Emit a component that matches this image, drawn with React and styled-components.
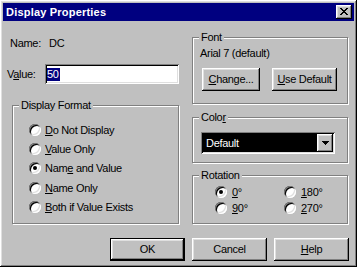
import React from 'react';
import styled, { createGlobalStyle } from "styled-components";

const GlobalStyle = createGlobalStyle`
  html, body {
    margin: 0;
    padding: 0;
    background: #c0c0c0;
  }
  * {
    box-sizing: border-box;
  }
`;

const raised = `
  box-shadow: inset -1px -1px #000, inset 1px 1px #fff, inset -2px -2px #808080, inset 2px 2px #dfdfdf;
`;

const sunken = `
  box-shadow: inset 1px 1px #808080, inset -1px -1px #fff, inset 2px 2px #000, inset -2px -2px #dfdfdf;
`;

const Window = styled.div`
  width: 357px;
  height: 267px;
  padding: 3px;
  background: #c0c0c0;
  display: flex;
  flex-direction: column;
  font-family: "Liberation Sans", Arial, sans-serif;
  font-size: 11px;
  letter-spacing: -0.3px;
  color: #000;
  ${raised}
`;

const TitleBar = styled.div`
  height: 18px;
  background: #000080;
  display: flex;
  align-items: center;
  justify-content: space-between;
  padding: 0 2px 0 3px;
`;

const Title = styled.span`
  color: #fff;
  font-weight: bold;
  letter-spacing: 0.2px;
`;

const CloseButton = styled.div`
  width: 16px;
  height: 14px;
  background: #c0c0c0;
  display: flex;
  align-items: center;
  justify-content: center;
  padding-bottom: 1px;
  ${raised}
`;

const Body = styled.div`
  flex: 1;
  display: grid;
  grid-template-columns: 172px 157px;
  grid-template-rows: auto auto;
  column-gap: 13px;
  padding: 0 7px 0 4px;
`;

const Column = styled.div`
  display: flex;
  flex-direction: column;
`;

const NameRow = styled.div`
  display: flex;
  height: 13px;
  line-height: 13px;
  margin-top: 16px;
  padding-left: 3px;
`;

const FieldLabel = styled.span`
  width: ${props => props.width}px;
  flex: none;
`;

const ValueRow = styled.div`
  display: flex;
  align-items: center;
  height: 20px;
  margin-top: 14px;
`;

const TextBox = styled.div`
  flex: 1;
  height: 20px;
  background: #fff;
  padding: 2px 2px;
  display: flex;
  align-items: center;
  ${sunken}
`;

const Selected = styled.span`
  background: #000080;
  color: #fff;
  line-height: 13px;
  padding: 0 1px 0 0;
`;

const Group = styled.div`
  border: 1px solid #808080;
  box-shadow: 1px 1px 0 #fff, inset 1px 1px 0 #fff;
  padding: 0 6px;
  margin-top: ${props => props.top}px;
  margin-left: ${props => props.left || 0}px;
  height: ${props => props.h}px;
  width: ${props => props.w}px;
`;

const Legend = styled.div`
  width: fit-content;
  height: 13px;
  line-height: 13px;
  margin-top: -7px;
  padding: 0 2px;
  background: #c0c0c0;
`;

const RadioList = styled.div`
  display: flex;
  flex-direction: column;
  margin-top: 8px;
  padding-left: 10px;
`;

const RadioRow = styled.div`
  display: flex;
  align-items: center;
  height: 19.3px;
  gap: 4px;
`;

const RadioCircle = styled.span`
  width: 12px;
  height: 12px;
  border-radius: 50%;
  background: #fff;
  flex: none;
  position: relative;
  box-shadow: inset 1px 1px #808080, inset -1px -1px #fff, inset 2px 2px #000, inset -2px -2px #dfdfdf;
  &::after {
    content: "";
    display: ${props => props.checked ? "block" : "none"};
    position: absolute;
    left: 4px;
    top: 4px;
    width: 4px;
    height: 4px;
    border-radius: 50%;
    background: #000;
  }
`;

const U = styled.span`
  text-decoration: underline;
  text-underline-offset: 1px;
`;

const FontName = styled.div`
  line-height: 13px;
  margin-top: 3px;
  padding-left: 1px;
`;

const ButtonPair = styled.div`
  display: flex;
  gap: 12px;
  margin-top: 8px;
  padding-left: 3px;
`;

const Button = styled.div`
  width: ${props => props.w}px;
  height: 23px;
  background: #c0c0c0;
  display: flex;
  align-items: center;
  justify-content: center;
  line-height: 13px;
  ${raised}
  ${props => props.isDefault && `
    box-shadow: inset 0 0 0 1px #000, inset -2px -2px #000, inset 2px 2px #fff, inset -3px -3px #808080, inset 3px 3px #dfdfdf;
  `}
`;

const Combo = styled.div`
  width: 134px;
  height: 22px;
  margin: 8px 0 0 2px;
  padding: 2px;
  background: #000;
  display: flex;
  ${sunken}
`;

const ComboValue = styled.div`
  flex: 1;
  color: #fff;
  line-height: 18px;
  padding-left: 3px;
`;

const ComboArrow = styled.div`
  width: 16px;
  height: 18px;
  background: #c0c0c0;
  display: flex;
  align-items: center;
  justify-content: center;
  ${raised}
`;

const RotationGrid = styled.div`
  display: grid;
  grid-template-columns: 69px auto;
  grid-auto-rows: 16px;
  margin-top: 2px;
  padding-left: 16px;
`;

const RotationItem = styled.div`
  display: flex;
  align-items: center;
  gap: 5px;
`;

const ButtonRow = styled.div`
  grid-column: 1 / 3;
  display: flex;
  justify-content: flex-end;
  gap: 7px;
  margin-top: 11px;
`;

const formats = [
  { pre: "", key: "D", post: "o Not Display" },
  { pre: "", key: "V", post: "alue Only" },
  { pre: "Nam", key: "e", post: " and Value", checked: true },
  { pre: "", key: "N", post: "ame Only" },
  { pre: "", key: "B", post: "oth if Value Exists" },
];

const rotations = [
  { key: "0", post: "°", checked: true },
  { key: "1", post: "80°" },
  { key: "9", post: "0°" },
  { key: "2", post: "70°" },
];

function CloseGlyph() {
  const rows = ["11000011", "01100110", "00111100", "00011000", "00111100", "01100110", "11000011"];
  return (
    <svg width="8" height="7" viewBox="0 0 8 7" shapeRendering="crispEdges">
      {rows.map((r, y) => r.split("").map((c, x) => c === "1" ? <rect key={x + "-" + y} x={x} y={y} width="1" height="1" fill="#000"/> : null))}
    </svg>
  );
}

export default class App extends React.Component {
  render() {
    return (
      <Window>
        <GlobalStyle/>
        <TitleBar>
          <Title>Display Properties</Title>
          <CloseButton><CloseGlyph/></CloseButton>
        </TitleBar>
        <Body>
          <Column>
            <NameRow>
              <FieldLabel width={39}>Name:</FieldLabel>
              <span>DC</span>
            </NameRow>
            <ValueRow>
              <FieldLabel width={38}>V<U>a</U>lue:</FieldLabel>
              <TextBox><Selected>50</Selected></TextBox>
            </ValueRow>
            <Group top={21} left={5} w={167} h={119}>
              <Legend>Display Format</Legend>
              <RadioList>
                {formats.map((f, i) => (
                  <RadioRow key={i}>
                    <RadioCircle checked={f.checked}/>
                    <span>{f.pre}<U>{f.key}</U>{f.post}</span>
                  </RadioRow>
                ))}
              </RadioList>
            </Group>
          </Column>
          <Column>
            <Group top={16} w={156} h={67}>
              <Legend>Font</Legend>
              <FontName>Arial 7 (default)</FontName>
              <ButtonPair>
                <Button w={58}><span><U>C</U>hange...</span></Button>
                <Button w={65}><span><U>U</U>se Default</span></Button>
              </ButtonPair>
            </Group>
            <Group top={13} w={156} h={46}>
              <Legend>Colo<U>r</U></Legend>
              <Combo>
                <ComboValue>Default</ComboValue>
                <ComboArrow>
                  <svg width="7" height="4" viewBox="0 0 7 4" shapeRendering="crispEdges">
                    <path d="M0 0h7v1H0zM1 1h5v1H1zM2 2h3v1H2zM3 3h1v1H3z" fill="#000"/>
                  </svg>
                </ComboArrow>
              </Combo>
            </Group>
            <Group top={12} w={156} h={49}>
              <Legend>Rotation</Legend>
              <RotationGrid>
                {rotations.map((r, i) => (
                  <RotationItem key={i}>
                    <RadioCircle checked={r.checked}/>
                    <span><U>{r.key}</U>{r.post}</span>
                  </RotationItem>
                ))}
              </RotationGrid>
            </Group>
          </Column>
          <ButtonRow>
            <Button w={75} isDefault>OK</Button>
            <Button w={75}>Cancel</Button>
            <Button w={75}><span><U>H</U>elp</span></Button>
          </ButtonRow>
        </Body>
      </Window>
    );
  }
}
